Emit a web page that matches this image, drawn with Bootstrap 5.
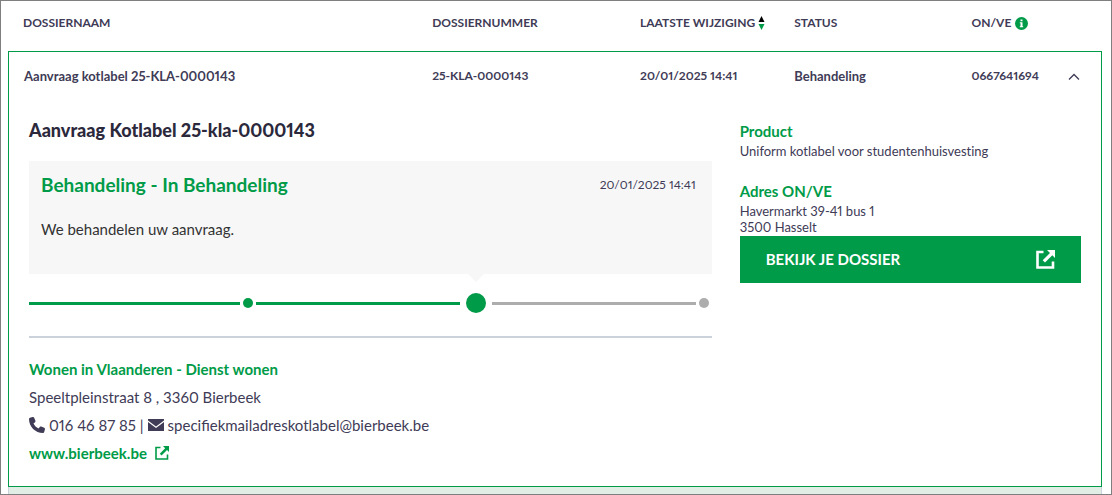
<!DOCTYPE html>
<html lang="nl">
<head>
<meta charset="utf-8">
<meta name="viewport" content="width=device-width, initial-scale=1">
<title>Dossiers</title>
<link href="https://cdn.jsdelivr.net/npm/bootstrap@5.3.0/dist/css/bootstrap.min.css" rel="stylesheet">
<style>
  :root { --groen: #009b48; --inkt: #403b56; }
  body { font-family: Lato, "Liberation Sans", sans-serif; font-size: 15px; line-height: 28px; font-variant-numeric: proportional-nums; color: var(--inkt); background: #fff; }
  svg { fill: currentColor; }
  .frame { border: 1px solid #7f7f7f; padding: 0 9px 0 7px; }

  .dossiers { table-layout: fixed; border-collapse: separate; border-spacing: 0; font-size: 12px; line-height: 18px; }
  .dossiers th { padding: 13px 0 19px 15px; font-weight: 700; text-transform: uppercase; white-space: nowrap; }
  .summary td { padding: 15px 0 15px 15px; font-weight: 700; border-top: 1px solid var(--groen); white-space: nowrap; }
  .summary td:first-child { border-left: 1px solid var(--groen); }
  .summary td:last-child { border-right: 1px solid var(--groen); padding-left: 3px; }
  .summary .wide-text { font-size: 13px; }
  .details { border: 1px solid var(--groen); border-top: 0; padding: 20px 20px 19px; }
  .icon-btn { color: inherit; line-height: 0; }

  .split { grid-template-columns: 2fr 1fr; column-gap: 28px; font-size: 15px; line-height: 28px; }
  .dossier-title { font-size: 18px; line-height: 21px; font-weight: 900; color: #2b293b; margin-bottom: 20px; }
  .status-box { background: #f7f7f7; padding: 12px 16px 33px 12px; line-height: 24px; }
  .status-title { font-size: 19px; line-height: 24px; font-weight: 700; color: var(--groen); margin-bottom: 20px; }
  .status-text { color: #333; }
  .status-date { font-size: 12px; }

  .track { grid-template-columns: 211fr 16px 204fr 32px 204fr 16px; height: 20px; margin: 19px 0 23px; }
  .seg { height: 3px; background: var(--groen); }
  .dot { width: 10px; height: 10px; border-radius: 50%; background: var(--groen); }
  .dot-now { width: 20px; height: 20px; }
  .track .todo { background: #adadad; }
  .pointer::before { content: ""; position: absolute; top: -19px; left: 8px; border: 8px solid transparent; border-top-color: #f7f7f7; border-bottom: 0; }
  .divider { border-top: 2px solid #cbd2dc; margin: 0 0 17px; opacity: 1; }

  .green-title { font-size: 15px; line-height: 28px; font-weight: 700; color: var(--groen); margin: 0; }
  .green-link { color: var(--groen); font-weight: 700; }
  .facts { font-variant-ligatures: none; }
  .facts dt { font-size: 15px; line-height: 23px; font-weight: 700; color: var(--groen); }
  .facts dd { font-size: 13px; line-height: 16px; margin-bottom: 21px; }
  .facts dd:last-child { margin-bottom: 1px; }
  .btn-dossier { --bs-btn-bg: #009b48; --bs-btn-color: #fff; --bs-btn-hover-bg: #00803b; --bs-btn-hover-color: #fff; padding: 12px 26px; font-size: 15px; line-height: 23px; font-weight: 700; border: 0; }
  .next-row { background: #e0eee5; border: 1px solid #cbd2dc; border-width: 0 1px; }
</style>
</head>
<body>
<main class="frame min-vh-100 d-flex flex-column">
  <table class="dossiers w-100">
    <colgroup>
      <col style="width:37.4%"><col style="width:19%"><col style="width:14.1%"><col style="width:16.2%"><col style="width:8%"><col>
    </colgroup>
    <thead>
      <tr>
        <th scope="col">Dossiernaam</th>
        <th scope="col">Dossiernummer</th>
        <th scope="col">Laatste wijziging
          <button type="button" class="btn p-0 border-0 icon-btn align-baseline" aria-label="Sorteren"><svg width="7" height="14" viewBox="0 0 7 14"><path fill="#000" d="M3.500 0L6.500 6H.5z"/><path fill="#009b48" d="M3.500 14L6.500 8H.5z"/></svg></button>
        </th>
        <th scope="col">Status</th>
        <th scope="col"><span class="d-flex align-items-center gap-1">ON/VE
          <svg width="13" height="13" viewBox="0 0 13 13"><circle cx="6.500" cy="6.500" r="6.500" fill="#009b48"/><path fill="#fff" d="M5.500 2.500h2v1.700h-2zM4.800 5.200h2.700v4h.7v1.100H4.800V9.200h.7V6.300h-.7z"/></svg></span></th>
        <th></th>
      </tr>
    </thead>
    <tbody>
      <tr class="summary">
        <td class="wide-text">Aanvraag kotlabel 25-KLA-0000143</td>
        <td>25-KLA-0000143</td>
        <td>20/01/2025 14:41</td>
        <td class="wide-text">Behandeling</td>
        <td>0667641694</td>
        <td class="text-center"><button type="button" class="btn p-0 border-0 icon-btn" aria-label="Inklappen" aria-expanded="true"><svg width="12" height="8" viewBox="0 0 12 8"><path d="M1 6.500L6 1.500l5 5" fill="none" stroke="currentColor" stroke-width="1.300"/></svg></button></td>
      </tr>
      <tr>
        <td class="details" colspan="6">
          <div class="split d-grid align-items-start">
            <section>
              <h2 class="dossier-title">Aanvraag Kotlabel 25-kla-0000143</h2>
              <div class="status-box">
                <div class="d-flex justify-content-between">
                  <h3 class="status-title">Behandeling - In Behandeling</h3>
                  <time class="status-date">20/01/2025 14:41</time>
                </div>
                <p class="status-text m-0">We behandelen uw aanvraag.</p>
              </div>
              <div class="track d-grid align-items-center">
                <div class="seg"></div><div class="dot mx-auto"></div>
                <div class="seg"></div><div class="pointer position-relative"><div class="dot dot-now mx-auto"></div></div>
                <div class="seg todo"></div><div class="dot todo mx-auto"></div>
              </div>
              <hr class="divider">
              <h3 class="green-title">Wonen in Vlaanderen - Dienst wonen</h3>
              <div>Speeltpleinstraat 8 , 3360 Bierbeek</div>
              <div class="d-flex align-items-center gap-1">
                <svg width="16" height="16" viewBox="0 0 512 512"><path d="M164.900 24.600c-7.700-18.600-28-28.500-47.400-23.200l-88 24C12.100 30.200 0 46 0 64C0 311.400 200.600 512 448 512c18 0 33.800-12.100 38.600-29.500l24-88c5.300-19.400-4.600-39.700-23.200-47.400l-96-40c-16.300-6.800-35.200-2.100-46.300 11.600L304.700 368C234.300 334.700 177.300 277.700 144 207.300L193.300 167c13.700-11.200 18.400-30 11.600-46.300l-40-96z"/></svg>
                <span>016 46 87 85 |</span>
                <svg width="16" height="12" viewBox="0 0 16 12"><path d="M0 0h16v1.600L8 7.600 0 1.600zM0 3l8 6 8-6v9H0z"/></svg>
                <span>specifiekmailadreskotlabel@bierbeek.be</span>
              </div>
              <div><a href="#" class="green-link text-decoration-none d-inline-flex align-items-center gap-2">www.bierbeek.be
                <svg width="14" height="14" viewBox="0 0 14 14"><path d="M5.500 1.500H1v11.500h11.500V8.500" fill="none" stroke="currentColor" stroke-width="1.600"/><path d="M8 0h6v6l-2-2-5.500 5.500-1.700-1.700L10.200 2.200z"/></svg></a></div>
            </section>
            <aside>
              <dl class="facts m-0">
                <dt>Product</dt>
                <dd>Uniform kotlabel voor studentenhuisvesting</dd>
                <dt>Adres ON/VE</dt>
                <dd>Havermarkt 39-41 bus 1<br>3500 Hasselt</dd>
              </dl>
              <button type="button" class="btn btn-dossier rounded-0 w-100 d-flex align-items-center justify-content-between">BEKIJK JE DOSSIER
                <svg width="19" height="19" viewBox="0 0 19 19"><path d="M7.500 2H1.500v15.500H17v-6" fill="none" stroke="currentColor" stroke-width="2.600"/><path d="M11 0h8v8l-2.700-2.700-7.300 7.300-2.300-2.300 7.300-7.300z"/></svg></button>
            </aside>
          </div>
        </td>
      </tr>
    </tbody>
  </table>
  <div class="next-row flex-grow-1"></div>
</main>
<script src="https://cdn.jsdelivr.net/npm/bootstrap@5.3.0/dist/js/bootstrap.bundle.min.js"></script>
</body>
</html>
